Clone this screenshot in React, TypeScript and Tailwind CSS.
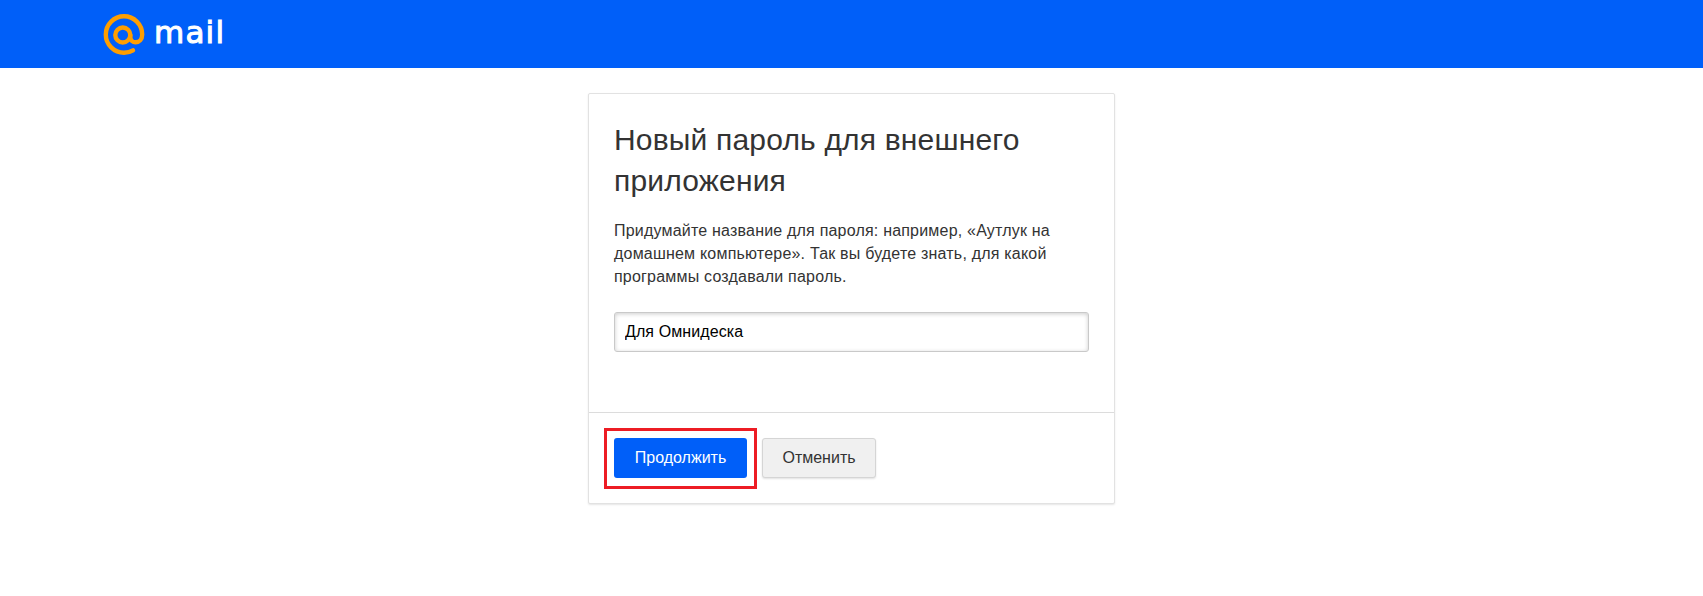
import React from "react";

const Logo = () => (
  <div className="flex items-start gap-[4px]">
    <svg width="50" height="50" viewBox="0 0 50 50" fill="none" stroke="#ff9e00" strokeWidth="4.400" strokeLinecap="round">
      <circle cx="22.800" cy="25" r="7.500" />
      <path d="M30.300 25v2c0 3.200 2.500 5.300 5.300 5.300 3.500 0 6.600-2.700 6.600-7.800C42.200 14.500 34 6.300 24 6.300S5.800 14.500 5.800 24.500 14 42.700 24 42.700c3.200 0 6.500-.9 9-2.400" />
    </svg>
    <span className="mt-[7px] font-['DejaVu_Sans',sans-serif] text-[31px] leading-none tracking-[1.2px] text-white [-webkit-text-stroke:1px_white]">mail</span>
  </div>
);

export default function App() {
  return (
    <div className="min-h-[596px] bg-white font-['Liberation_Sans',Arial,sans-serif]">
      {/* header */}
      <header className="h-[68px] bg-[#005ff9] flex items-start pl-[100px] pt-[10px]">
        <Logo />
      </header>

      {/* card */}
      <div className="pt-[25px] pl-[588px]">
        <div className="w-[527px] h-[411px] bg-white border border-[#e2e2e2] rounded-[2px] shadow-[0_1px_2px_rgba(0,0,0,0.1)] flex flex-col">
          <div className="h-[319px] px-[25px] pt-[25px] border-b border-[#dcdcdc]">
            <h1 className="text-[30px] leading-[41px] tracking-[0.18px] font-normal text-[#333333]">
              Новый пароль для внешнего приложения
            </h1>
            <p className="mt-[18px] text-[16px] leading-[23px] tracking-[0.2px] text-[#333333] w-[460px]">
              Придумайте название для пароля: например, «Аутлук на домашнем компьютере». Так вы будете знать, для какой программы создавали пароль.
            </p>
            <input
              readOnly
              value="Для Омнидеска"
              className="mt-[24px] block w-[475px] h-[40px] px-[10px] text-[16px] tracking-[0.1px] text-black bg-white border border-[#c9c9c9] rounded-[3px] shadow-[inset_0_1px_4px_rgba(0,0,0,0.2)] outline-none"
            />
          </div>
          <div className="flex items-start gap-[15px] pl-[25px] pt-[25px]">
            <div className="relative">
              <button className="block w-[133px] h-[40px] bg-[#005ff9] rounded-[3px] text-[16px] text-white">
                Продолжить
              </button>
              <span className="absolute -left-[10px] -top-[10px] -right-[10px] -bottom-[11px] border-[3px] border-[#ed1c24]" />
            </div>
            <button className="w-[114px] h-[40px] bg-[#f0f0f0] border border-[#d5d5d5] rounded-[3px] text-[16px] text-[#333333] shadow-[0_1px_2px_rgba(0,0,0,0.12)]">
              Отменить
            </button>
          </div>
        </div>
      </div>
    </div>
  );
}
